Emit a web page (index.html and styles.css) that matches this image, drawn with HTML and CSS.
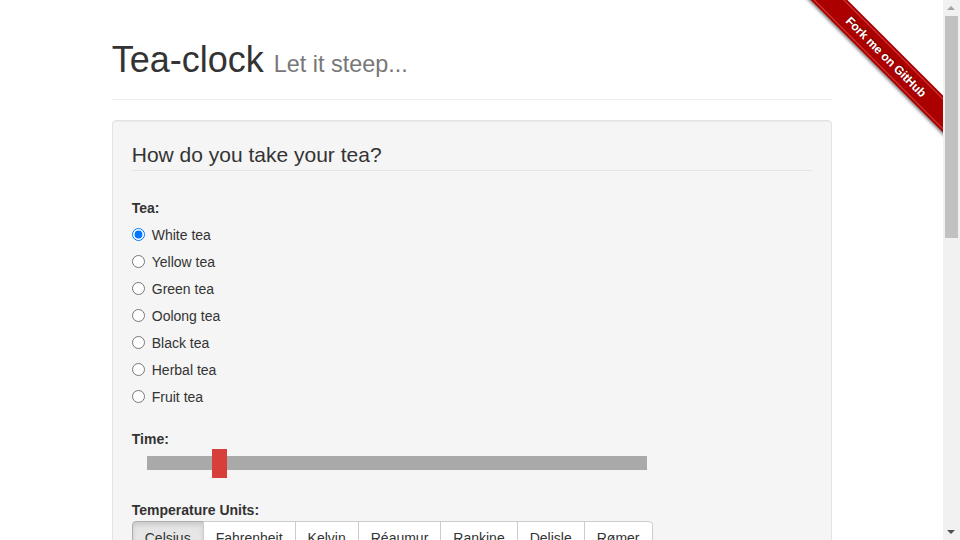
FILE: index.html
```html
<!DOCTYPE html>
<html lang="en">
<head>
<meta charset="utf-8">
<title>Tea-clock</title>
<link rel="stylesheet" href="styles.css">
</head>
<body>
<div class="viewport">
  <div class="container">
    <div class="page-header">
      <h1>Tea-clock <small>Let it steep...</small></h1>
    </div>
    <div class="well">
      <fieldset class="form">
        <legend>How do you take your tea?</legend>
        <div class="form-group">
          <label class="control-label">Tea:</label>
          <div class="options">
            <div class="radio"><label><input type="radio" name="tea" checked><span>White tea</span></label></div>
            <div class="radio"><label><input type="radio" name="tea"><span>Yellow tea</span></label></div>
            <div class="radio"><label><input type="radio" name="tea"><span>Green tea</span></label></div>
            <div class="radio"><label><input type="radio" name="tea"><span>Oolong tea</span></label></div>
            <div class="radio"><label><input type="radio" name="tea"><span>Black tea</span></label></div>
            <div class="radio"><label><input type="radio" name="tea"><span>Herbal tea</span></label></div>
            <div class="radio"><label><input type="radio" name="tea"><span>Fruit tea</span></label></div>
          </div>
        </div>
        <div class="form-group time-group">
          <label class="control-label">Time:</label>
          <div class="slider">
            <div class="slider-bar"><span class="slider-handle"></span></div>
          </div>
        </div>
        <div class="form-group units-group">
          <label class="control-label">Temperature Units:</label>
          <div class="btn-group">
            <button class="btn active">Celsius</button>
            <button class="btn">Fahrenheit</button>
            <button class="btn">Kelvin</button>
            <button class="btn">Réaumur</button>
            <button class="btn">Rankine</button>
            <button class="btn">Delisle</button>
            <button class="btn">Rømer</button>
          </div>
        </div>
      </fieldset>
    </div>
  </div>
  <a class="ribbon-box" href="#"><span class="ribbon">Fork me on GitHub</span></a>
</div>
<div class="scrollbar">
  <span class="arrow arrow-up"></span>
  <span class="thumb"></span>
  <span class="arrow arrow-down"></span>
</div>
</body>
</html>
```

FILE: styles.css
```css
html {
  overflow: hidden;
}
body {
  margin: 0;
  font-family: "Liberation Sans", Arial, sans-serif;
  font-size: 14px;
  line-height: 20px;
  color: #333;
  background: #fff;
}
.viewport {
  position: relative;
  width: 943px;
  height: 540px;
  overflow: hidden;
}
.container {
  width: 720px;
  margin: 0 auto;
  padding-left: 0.5px;
}
.page-header {
  margin: 0 0 20px;
  padding-bottom: 19px;
  border-bottom: 1px solid #eee;
}
.page-header h1 {
  margin: 0;
  padding-top: 40px;
  font-size: 36px;
  font-weight: 500;
  line-height: 40px;
  color: #333;
}
.page-header small {
  font-size: 65%;
  font-weight: 400;
  line-height: 1;
  color: #777;
}
.well {
  background: #f5f5f5;
  border: 1px solid #e3e3e3;
  border-radius: 4px;
  box-shadow: inset 0 1px 1px rgba(0, 0, 0, 0.05);
  padding: 19px 19px 19px;
}
.form {
  border: 0;
  margin: 0;
  padding: 0;
  min-width: 0;
}
.form legend {
  display: block;
  width: 100%;
  padding: 0;
  margin: 0 0 27px;
  font-size: 21px;
  line-height: 30px;
  color: #333;
  border-bottom: 1px solid #e5e5e5;
}
.control-label {
  display: block;
  font-weight: 700;
  line-height: 20px;
}
.options {
  margin-top: 3px;
}
.radio label {
  display: flex;
  align-items: center;
  height: 27px;
  cursor: pointer;
}
.radio input {
  width: 13px;
  height: 13px;
  margin: 0 7px 0 0;
}
.time-group {
  margin-top: 19px;
}
.slider {
  padding: 7px 0 8px 15px;
}
.slider-bar {
  position: relative;
  width: 500px;
  height: 14px;
  background: #a9a9a9;
}
.slider-handle {
  position: absolute;
  left: 65px;
  top: -7px;
  width: 15px;
  height: 29px;
  background: #d7403a;
}
.units-group {
  margin-top: 22px;
}
.units-group .control-label {
  margin-bottom: 1px;
}
.btn-group {
  display: flex;
}
.btn {
  font-family: inherit;
  font-size: 14px;
  line-height: 20px;
  color: #333;
  background: #fff;
  border: 1px solid #ccc;
  padding: 6px 12px;
  margin: 0 0 0 -1px;
  border-radius: 0;
  cursor: pointer;
}
.btn:first-child {
  margin-left: 0;
  border-radius: 4px 0 0 4px;
}
.btn:last-child {
  border-radius: 0 4px 4px 0;
}
.btn.active {
  background: #e6e6e6;
  border-color: #adadad;
  box-shadow: inset 0 3px 5px rgba(0, 0, 0, 0.125);
}
.ribbon-box {
  position: absolute;
  top: 0;
  right: 0;
  width: 149px;
  height: 149px;
  overflow: hidden;
  text-decoration: none;
}
.ribbon {
  position: absolute;
  left: -8.5px;
  top: 44px;
  width: 200px;
  height: 26px;
  transform: rotate(45deg);
  background: #aa0000;
  box-shadow: 0 2px 3px rgba(0, 0, 0, 0.45);
  color: #fff;
  font-family: "Liberation Sans", Arial, sans-serif;
  font-weight: 700;
  font-size: 12px;
  line-height: 26px;
  text-align: center;
  text-shadow: 0 -1px 0 rgba(0, 0, 0, 0.5);
}
.ribbon::before {
  content: "";
  position: absolute;
  left: 0;
  right: 0;
  top: 2px;
  bottom: 2px;
  border-top: 1px solid rgba(255, 120, 120, 0.55);
  border-bottom: 1px solid rgba(255, 120, 120, 0.55);
}
.scrollbar {
  position: fixed;
  top: 0;
  right: 0;
  width: 17px;
  height: 540px;
  background: #f1f1f1;
}
.thumb {
  position: absolute;
  left: 2px;
  top: 16px;
  width: 13px;
  height: 222px;
  background: #c1c1c1;
}
.arrow {
  position: absolute;
  left: 4px;
  width: 0;
  height: 0;
  border-left: 4.5px solid transparent;
  border-right: 4.5px solid transparent;
}
.arrow-up {
  top: 6px;
  border-bottom: 4.5px solid #a3a3a3;
}
.arrow-down {
  bottom: 6px;
  border-top: 4.5px solid #505050;
}
```
